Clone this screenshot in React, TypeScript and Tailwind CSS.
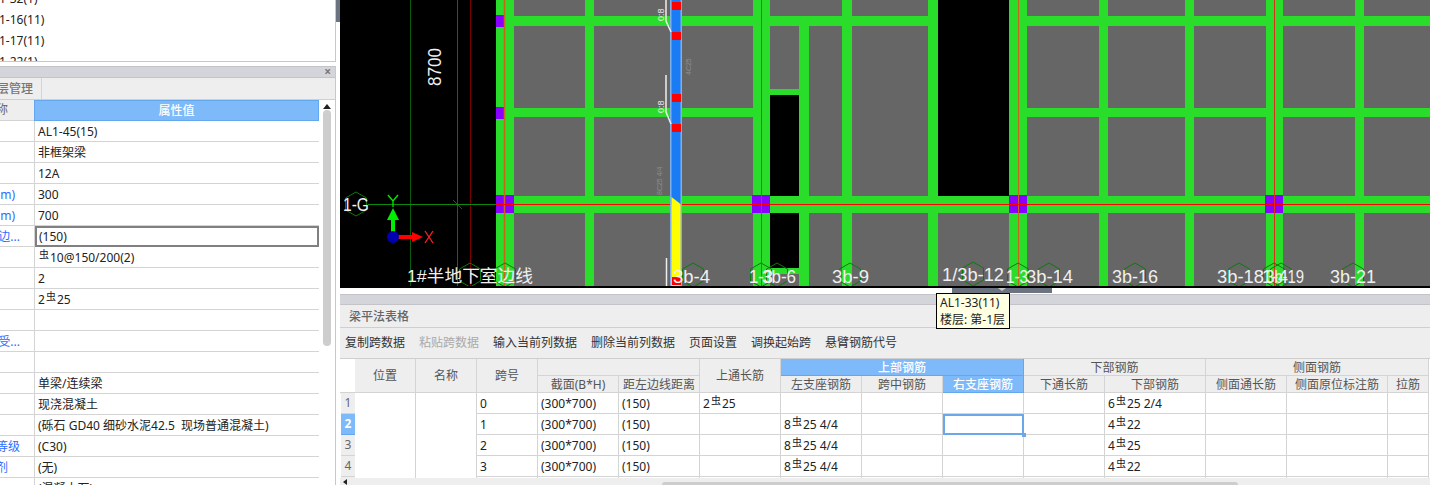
import React from "react";

const FONT = "font-['Noto_Sans','Noto_Sans_CJK_SC',sans-serif]";

function Hex({ cx, cy }: { cx: number; cy: number }) {
  const pts = [
    [cx, cy - 12],
    [cx + 10.5, cy - 6],
    [cx + 10.5, cy + 6],
    [cx, cy + 12],
    [cx - 10.5, cy + 6],
    [cx - 10.5, cy - 6],
  ]
    .map((p) => p.join(","))
    .join(" ");
  return <polygon points={pts} fill="none" stroke="#0b7a0b" strokeWidth={1} />;
}

const LABELS: [string, number, number, number][] = [
  ["1-3", 749, 24, 283],
  ["3b-6", 762, 34, 283],
  ["3b-9", 832, 37, 283],
  ["1/3b-12", 942, 62, 281],
  ["1-3", 1006, 22, 283],
  ["3b-14", 1026, 47, 283],
  ["3b-16", 1112, 46, 283],
  ["3b-18", 1217, 47, 283],
  ["1-4", 1262, 26, 283],
  ["3b-19", 1266, 38, 283],
  ["3b-21", 1330, 46, 283],
  ["3b-4", 673, 37, 283],
];

const HEXES: [number, number][] = [
  [470, 275], [505, 275], [693, 275], [761, 275], [777, 275], [850, 275], [973, 274],
  [1018, 275], [1049, 275], [1135, 275], [1239, 275], [1274, 275], [1281, 275], [1353, 275],
];

function Canvas() {
  const G = "#2bdd2b";
  const verticals: [number, number, number][] = [
    [496, 18, 0], [585, 9, 0], [753, 17, 0], [799, 10, 26], [842, 10, 0], [928, 10, 0],
    [1009, 18, 0], [1099, 9, 0], [1185, 9, 0], [1266, 17, 0], [1355, 9, 0],
  ];
  return (
    <svg viewBox="340 0 1090 286" className="block w-[1090px] h-[286px] shrink-0 bg-black">
      <rect x={496} y={0} width={934} height={286} fill="#666666" />
      <rect x={938} y={0} width={71} height={196} fill="#000" />
      <rect x={770} y={95} width={29} height={101} fill="#000" />
      <rect x={770} y={213} width={29} height={55} fill="#000" />

      {verticals.map(([x, w, y]) => (
        <rect key={x} x={x} y={y} width={w} height={286 - y} fill={G} />
      ))}
      <rect x={496} y={16} width={442} height={10} fill={G} />
      <rect x={1009} y={16} width={421} height={10} fill={G} />
      <rect x={496} y={108} width={257} height={9} fill={G} />
      <rect x={1027} y={108} width={403} height={9} fill={G} />
      <rect x={770} y={89} width={29} height={6} fill={G} />
      <rect x={770} y={268} width={29} height={6} fill={G} />
      <rect x={496} y={196} width={934} height={17} fill={G} />

      <line x1={410.5} y1={0} x2={410.5} y2={286} stroke="#0b5c0b" />
      <line x1={457.5} y1={0} x2={457.5} y2={286} stroke="#0b6e0b" />
      <line x1={470.5} y1={0} x2={470.5} y2={286} stroke="#7a0000" />
      <line x1={453} y1={200} x2={462} y2={209} stroke="#0b6e0b" />
      <line x1={368} y1={204.5} x2={496} y2={204.5} stroke="#0b8a0b" />

      <rect x={496} y={15} width={9} height={12} fill="#8a00ff" />
      <rect x={496} y={107} width={9} height={12} fill="#8a00ff" />
      {[496, 752, 1009, 1265].map((x) => (
        <rect key={x} x={x} y={195} width={18} height={18} fill="#8a00ff" />
      ))}

      <line x1={504.5} y1={0} x2={504.5} y2={286} stroke="#c8641a" strokeWidth={1.5} />
      <line x1={761.5} y1={0} x2={761.5} y2={286} stroke="#d8301a" />
      <line x1={1018.5} y1={0} x2={1018.5} y2={286} stroke="#c8641a" />
      <line x1={1274.5} y1={0} x2={1274.5} y2={286} stroke="#d8301a" />
      <line x1={496} y1={204.5} x2={1430} y2={204.5} stroke="#ff0000" />

      <rect x={670} y={0} width={12} height={286} fill="#7fb0e8" />
      <rect x={671.5} y={0} width={9} height={205} fill="#1a7cf5" />
      <polygon points="671.5,197 680.5,204 680.5,286 671.5,286" fill="#ffff00" />
      {[2, 32, 94, 124, 277].map((y) => (
        <rect key={y} x={672} y={y} width={9} height={8} fill="#ff0000" />
      ))}
      <polyline points="666,0 666,21 671,32" fill="none" stroke="#eeeeee" strokeWidth={1.5} />
      <polyline points="666,75 666,112 671,124" fill="none" stroke="#eeeeee" strokeWidth={1.5} />
      <line x1={666.5} y1={258} x2={666.5} y2={286} stroke="#eeeeee" strokeWidth={1.5} />
      <g fill="#e8e8e8" fontFamily="'Liberation Sans',sans-serif" fontSize={9}>
        <text transform="translate(664,21) rotate(-90)">0:8</text>
        <text transform="translate(664,113) rotate(-90)">0:8</text>
      </g>
      <g fill="#8e8e8e" fontFamily="'Liberation Sans',sans-serif" fontSize={7}>
        <text transform="translate(691,75) rotate(-90)">4C25</text>
        <text transform="translate(662,195) rotate(-90)">8C25 4/4</text>
      </g>

      <Hex cx={356} cy={204} />
      {HEXES.map(([x, y]) => (
        <Hex key={x} cx={x} cy={y} />
      ))}

      <g fill="#f0f0f0" fontFamily="'Liberation Sans',sans-serif" fontSize={19}>
        <text x={343} y={211} textLength={26} lengthAdjust="spacingAndGlyphs">1-G</text>
        {LABELS.map(([t, x, w, y]) => (
          <text key={t + x} x={x} y={y} textLength={w} lengthAdjust="spacingAndGlyphs">{t}</text>
        ))}
        <text
          x={407}
          y={282}
          textLength={126}
          lengthAdjust="spacingAndGlyphs"
          fontSize={17}
          fontFamily="'Liberation Sans','Noto Sans CJK SC',sans-serif"
        >
          1#半地下室边线
        </text>
        <text
          transform="translate(441,86) rotate(-90)"
          fontSize={19}
          textLength={38}
          lengthAdjust="spacingAndGlyphs"
        >
          8700
        </text>
      </g>

      <rect x={391} y={214} width={4} height={20} fill="#00ee00" />
      <polygon points="393,208 387,220 399,220" fill="#00ee00" />
      <path d="M388 195 L393 201 L398 195 M393 201 L393 207" fill="none" stroke="#00ee00" strokeWidth={1.3} />
      <rect x={398} y={235} width={16} height={4} fill="#ff0000" />
      <polygon points="423,237 412,232 412,242" fill="#ff0000" />
      <path d="M425 231 L433 243 M433 231 L425 243" fill="none" stroke="#ff2020" strokeWidth={1.3} />
      <circle cx={393} cy={237} r={6} fill="#0000b0" />
    </svg>
  );
}

const Rebar = () => <span className="text-[10px] relative top-[-3px] mx-[1px]">虫</span>;

function Bar({ n, rest }: { n: string; rest: string }) {
  return (
    <>
      {n}
      <Rebar />
      {rest}
    </>
  );
}

type PropRow = { tail?: string; pr?: string; val?: React.ReactNode; selected?: boolean };

const PROPS: PropRow[] = [
  { val: "AL1-45(15)" },
  { val: "非框架梁" },
  { val: "12A" },
  { tail: "m)", pr: "pr-[19px]", val: "300" },
  { tail: "m)", pr: "pr-[19px]", val: "700" },
  { tail: "边...", pr: "pr-[14px]", val: "(150)", selected: true },
  { val: <Bar n="" rest="10@150/200(2)" /> },
  { val: "2" },
  { val: <Bar n="2" rest="25" /> },
  {},
  { tail: "受...", pr: "pr-[14px]" },
  {},
  { val: "单梁/连续梁" },
  { val: "现浇混凝土" },
  { val: "(砾石 GD40 细砂水泥42.5  现场普通混凝土)" },
  { tail: "等级", pr: "pr-[14px]", val: "(C30)" },
  { tail: "剂", pr: "pr-[26px]", val: "(无)" },
  { val: "(混凝土石)" },
];

function LeftPanel() {
  return (
    <div className="w-[340px] shrink-0 h-[485px] flex flex-col bg-white relative overflow-hidden">
      <div className="w-[336px] h-[62px] shrink-0 border-r border-b border-[#c8c8c8] overflow-hidden text-[12px] text-[#222] leading-[21px]">
        <div className="-ml-[1px] -mt-[12px]">1-32(1)</div>
        <div className="-ml-[1px]">1-16(11)</div>
        <div className="-ml-[1px]">1-17(11)</div>
        <div className="-ml-[1px]">1-22(1)</div>
      </div>
      <div className="absolute right-0 top-0 w-[4px] h-[22px] bg-[#6b7280]" />
      <div className="h-[4px] shrink-0" />
      <div className="w-[336px] flex-1 min-h-0 flex flex-col border-r border-[#c8c8c8] overflow-hidden">
        <div className="h-[12px] shrink-0 bg-[#d4d5da] border-y border-[#c4c4c8] flex items-center justify-end pr-[4px]">
          <span className="text-[12px] leading-none text-[#777] font-bold">×</span>
        </div>
        <div className="h-[22px] shrink-0 bg-[#eeeeee] border-b border-[#cfcfcf] flex">
          <div className="w-[42px] border-r border-[#d4d4d4] flex items-center justify-end pr-[8px] overflow-hidden whitespace-nowrap text-[12px] text-[#777] font-medium">
            楼层管理
          </div>
        </div>
        <div className="flex flex-1 min-h-0">
          <div className="w-[319px] shrink-0 overflow-hidden">
            <div className="flex h-[21px]">
              <div className="w-[34px] shrink-0 bg-[#eeeeee] border-b border-[#d4d4d4] flex justify-end items-center pr-[26px] overflow-hidden whitespace-nowrap text-[12px] text-[#666]">
                称
              </div>
              <div className="flex-1 bg-[#7eb9f9] border border-[#63a7ee] flex items-center justify-center text-[12px] text-white font-medium">
                属性值
              </div>
            </div>
            {PROPS.map((r, i) => (
              <div key={i} className="flex h-[21px] text-[12px] whitespace-pre">
                <div
                  className={`w-[35px] shrink-0 border-r border-b border-[#d4d4d4] flex items-center justify-end overflow-hidden pt-[1px] text-[#2f6bff] ${r.pr ?? ""}`}
                >
                  {r.tail}
                </div>
                {r.selected ? (
                  <div className="flex-1 border-2 border-[#808080] flex items-center pl-[2px] pt-[1px] text-[#222]">{r.val}</div>
                ) : (
                  <div className="flex-1 border-b border-[#d4d4d4] flex items-center pl-[3px] pt-[1px] text-[#222]">{r.val}</div>
                )}
              </div>
            ))}
          </div>
          <div className="flex-1 relative flex flex-col items-center">
            <div className="w-0 h-0 mt-[4px] border-x-[4px] border-x-transparent border-b-[5px] border-b-[#222]" />
            <div className="w-[8px] h-[236px] mt-[1px] rounded-[4px] bg-[#cdcdcd]" />
          </div>
        </div>
      </div>
    </div>
  );
}

const H = "border-r border-b border-[#d4d4d4] bg-[#eeeeee] flex items-center justify-center pt-[1px] text-[#555]";
const HB = "border-r border-b border-[#63a7ee] bg-[#7eb9f9] flex items-center justify-center pt-[1px] text-white font-medium";
const C = "border-r border-b border-[#d4d4d4] flex items-center pl-[3px] pt-[1px] text-[#222] whitespace-nowrap";

const ROWS: { span: string; a: React.ReactNode; l: React.ReactNode; b: React.ReactNode }[] = [
  { span: "0", a: <Bar n="2" rest="25" />, l: "", b: <Bar n="6" rest="25 2/4" /> },
  { span: "1", a: "", l: <Bar n="8" rest="25 4/4" />, b: <Bar n="4" rest="22" /> },
  { span: "2", a: "", l: <Bar n="8" rest="25 4/4" />, b: <Bar n="4" rest="25" /> },
  { span: "3", a: "", l: <Bar n="8" rest="25 4/4" />, b: <Bar n="4" rest="22" /> },
  { span: "", a: "", l: "", b: "" },
];

function Table() {
  return (
    <div className="h-[119px] overflow-hidden shrink-0 bg-white">
      <div className="grid grid-cols-[15px_61px_61px_61px_81px_81px_81px_81px_81px_81px_81px_101px_81px_101px_41px] grid-rows-[17px_17px_21px_21px_21px_21px_21px] text-[12px]">
        <div className="row-span-2 bg-white border-b border-[#d4d4d4]" />
        <div className={`${H} row-span-2`}>位置</div>
        <div className={`${H} row-span-2`}>名称</div>
        <div className={`${H} row-span-2`}>跨号</div>
        <div className={`${H} col-span-2`} />
        <div className={`${H} row-span-2`}>上通长筋</div>
        <div className={`${HB} col-span-3`}>上部钢筋</div>
        <div className={`${H} col-span-2`}>下部钢筋</div>
        <div className={`${H} col-span-3`}>侧面钢筋</div>

        <div className={H}>截面(B*H)</div>
        <div className={H}>距左边线距离</div>
        <div className={H}>左支座钢筋</div>
        <div className={H}>跨中钢筋</div>
        <div className={HB}>右支座钢筋</div>
        <div className={H}>下通长筋</div>
        <div className={H}>下部钢筋</div>
        <div className={H}>侧面通长筋</div>
        <div className={H}>侧面原位标注筋</div>
        <div className={H}>拉筋</div>

        {ROWS.map((r, i) => (
          <React.Fragment key={i}>
            <div
              className={
                i === 1
                  ? "ml-[1px] border-b border-[#63a7ee] bg-[#7eb9f9] flex items-center justify-center text-white font-bold"
                  : "ml-[1px] border-b border-[#d4d4d4] bg-[#eeeeee] flex items-center justify-center text-[#666]"
              }
            >
              {i < 4 ? i + 1 : ""}
            </div>
            <div className="border-r border-[#d4d4d4]" />
            <div className="border-r border-[#d4d4d4]" />
            <div className={C}>{r.span}</div>
            <div className={C}>{i < 4 ? "(300*700)" : ""}</div>
            <div className={C}>{i < 4 ? "(150)" : ""}</div>
            <div className={C}>{r.a}</div>
            <div className={C}>{r.l}</div>
            <div className={C} />
            {i === 1 ? (
              <div className="relative border-2 border-[#6aa8ea]">
                <div className="absolute -right-[4px] -bottom-[4px] w-[4px] h-[4px] bg-[#6aa8ea]" />
              </div>
            ) : (
              <div className={C} />
            )}
            <div className={C} />
            <div className={C}>{r.b}</div>
            <div className={C} />
            <div className={C} />
            <div className={C} />
          </React.Fragment>
        ))}
      </div>
    </div>
  );
}

function RightPanel() {
  const tools: [string, boolean][] = [
    ["复制跨数据", false],
    ["粘贴跨数据", true],
    ["输入当前列数据", false],
    ["删除当前列数据", false],
    ["页面设置", false],
    ["调换起始跨", false],
    ["悬臂钢筋代号", false],
  ];
  return (
    <div className="flex-1 min-w-0 h-[485px] flex flex-col relative">
      <Canvas />
      <div className="h-[2px] shrink-0 bg-black" />
      <div className="h-[6px] shrink-0 bg-white relative">
        <div className="absolute left-[612px] top-0 w-[100px] h-[5px] bg-[#6b7280] flex justify-center">
          <div className="w-0 h-0 border-x-[4px] border-x-transparent border-t-[3px] border-t-[#c8c8c8]" />
        </div>
      </div>
      <div className="h-[11px] shrink-0 bg-[#d4d5da] border-y border-[#c4c4c8]" />
      <div className="h-[23px] shrink-0 bg-[#eeeeee] border-b border-[#cfcfcf] flex items-center pl-[9px] pt-[1px] text-[12px] text-[#666] font-medium">
        梁平法表格
      </div>
      <div className="h-[31px] shrink-0 bg-[#eeeeee] border-b border-[#cfcfcf] flex items-center gap-[14px] pl-[5px] text-[12px]">
        {tools.map(([t, dis]) => (
          <span key={t} className={dis ? "text-[#aaaaaa]" : "text-[#333]"}>
            {t}
          </span>
        ))}
      </div>
      <Table />
      <div className="flex-1 bg-[#eeeeee] relative">
        <div className="ml-[322px] mt-[4px] w-[576px] h-[3px] rounded-t-[3px] bg-[#cdcdcd]" />
        <div className="absolute left-[3px] top-[1px] w-0 h-0 border-y-[3px] border-y-transparent border-r-[4px] border-r-[#222]" />
      </div>
      <div className="absolute left-[596px] top-[293px] w-[74px] h-[36px] bg-[#ffffe1] border border-black px-[3px] text-[12px] leading-[17px] text-[#222] whitespace-nowrap">
        <div>AL1-33(11)</div>
        <div>楼层: 第-1层</div>
      </div>
    </div>
  );
}

export default function App() {
  return (
    <div className={`w-[1430px] h-[485px] flex overflow-hidden bg-white ${FONT}`}>
      <LeftPanel />
      <RightPanel />
    </div>
  );
}
